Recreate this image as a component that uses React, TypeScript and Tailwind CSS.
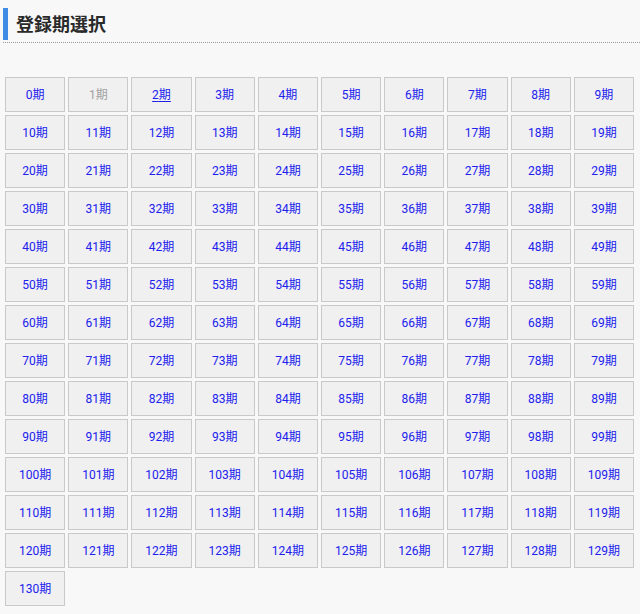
const terms = Array.from({ length: 131 }, (_, i) => i);

function TermButton({ n }: { n: number }) {
  const disabled = n === 1;
  const current = n === 2;
  return (
    <button
      type="button"
      disabled={disabled}
      className={`h-[35px] border border-[#c9c9c9] bg-[#f0f0f0] text-[12px] font-normal leading-none ${
        disabled ? "text-[#a0a0a0]" : "text-[#2020ee]"
      } ${current ? "underline decoration-[#2020ee] underline-offset-2" : ""}`}
    >
      {n}期
    </button>
  );
}

export default function App() {
  return (
    <div
      className="min-h-[614px] bg-[#f8f8f8] pt-[8px]"
      style={{ fontFamily: 'Roboto, "Noto Sans CJK JP", sans-serif' }}
    >
      {/* heading */}
      <div className="ml-[3px] border-b border-dotted border-[#9a9a9a] pb-[2px]">
        <h2 className="flex h-[32px] items-center border-l-[5px] border-[#3f8be6] pl-[8px] text-[18px] font-bold text-[#2a2a2a]">
          登録期選択
        </h2>
      </div>

      {/* term grid */}
      <div className="mt-[34px] grid grid-cols-10 gap-[3px] pl-[5px] pr-[6px]">
        {terms.map((n) => (
          <TermButton key={n} n={n} />
        ))}
      </div>
    </div>
  );
}
